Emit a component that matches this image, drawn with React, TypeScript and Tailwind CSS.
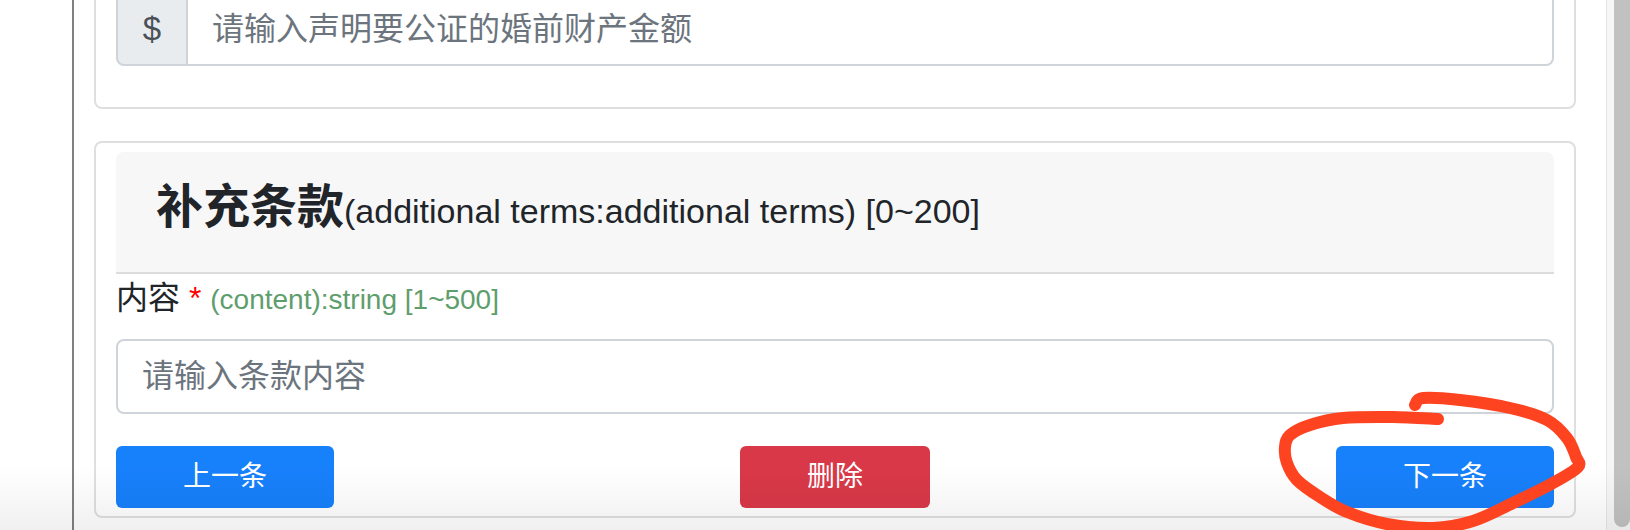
import React from 'react';

// hand-drawn red ring around the "next" button, in page coordinates
const ring: [number, number][] = [
  [1438, 419], [1393, 417], [1343, 418], [1310, 425], [1290, 435], [1285, 447],
  [1287, 463], [1297, 480], [1320, 497], [1347, 512], [1387, 524], [1433, 528],
  [1473, 521], [1513, 503], [1553, 483], [1578, 467], [1576, 457], [1567, 438],
  [1547, 420], [1510, 408], [1460, 400], [1423, 398], [1415, 405],
];

function smooth(pts: [number, number][]) {
  let d = `M${pts[0][0]},${pts[0][1]}`;
  for (let i = 0; i < pts.length - 1; i++) {
    const p0 = pts[i - 1] || pts[i];
    const p1 = pts[i];
    const p2 = pts[i + 1];
    const p3 = pts[i + 2] || p2;
    const c1x = p1[0] + (p2[0] - p0[0]) / 6;
    const c1y = p1[1] + (p2[1] - p0[1]) / 6;
    const c2x = p2[0] - (p3[0] - p1[0]) / 6;
    const c2y = p2[1] - (p3[1] - p1[1]) / 6;
    d += ` C${c1x},${c1y} ${c2x},${c2y} ${p2[0]},${p2[1]}`;
  }
  return d;
}

export default function App() {
  return (
    <div className="relative h-[530px] w-[1630px] overflow-hidden bg-white font-['Liberation_Sans','Noto_Sans_CJK_SC',sans-serif] text-[#212529]">
      <div className="flex h-full">
        <div className="w-[72px] shrink-0" />

        <main className="flex-1 border-l-2 border-[#808080] pl-[20px] pr-[30px]">
          {/* amount card, scrolled mostly out of view */}
          <section className="-mt-[23px] rounded-[8px] border-2 border-[#dfdfdf] px-[20px] pt-[10px] pb-[41px]">
            <div className="flex h-[77px]">
              <span className="flex w-[72px] shrink-0 items-center justify-center rounded-l-[8px] border-2 border-[#ced4da] bg-[#e9ecef] pt-[2px] text-[33px] text-[#495057]">
                $
              </span>
              <input
                placeholder="请输入声明要公证的婚前财产金额"
                className="min-w-0 flex-1 rounded-r-[8px] border-2 border-l-0 border-[#ced4da] bg-white px-[24px] pt-[3px] text-[32px] outline-none placeholder:text-[#6c757d]"
              />
            </div>
          </section>

          {/* additional terms card */}
          <section className="mt-[32px] rounded-[8px] border-2 border-[#dfdfdf] px-[20px] pt-[9px] pb-[8px]">
            <div className="rounded-t-[8px] border-b-2 border-[#dcdcdc] bg-[#f7f7f7] pl-[40px] pt-[26px] pb-[36px]">
              <h4 className="text-[47px] font-bold leading-[58px]">
                补充条款
                <span className="text-[34px] font-normal leading-none">
                  (additional terms:additional terms) [0~200]
                </span>
              </h4>
            </div>

            <label className="block h-[49px] text-[32px] leading-[49px]">
              内容 <span className="text-[#ff0000]">*</span>{' '}
              <small className="text-[28px] text-[#5e9e6c]">(content):string [1~500]</small>
            </label>

            <input
              placeholder="请输入条款内容"
              className="mt-[16px] block h-[75px] w-full rounded-[8px] border-2 border-[#ced4da] bg-white px-[24px] text-[32px] outline-none placeholder:text-[#6c757d]"
            />

            <div className="mt-[32px] flex items-center justify-between">
              <button className="h-[62px] w-[218px] rounded-[6px] bg-[#1780fb] text-[28px] text-white">上一条</button>
              <button className="h-[62px] w-[190px] rounded-[6px] bg-[#d93848] text-[28px] text-white">删除</button>
              <button className="h-[62px] w-[218px] rounded-[6px] bg-[#1780fb] text-[28px] text-white">下一条</button>
            </div>
          </section>
        </main>

        <div className="w-[24px] shrink-0 border-l border-[#e6e6e6] bg-[#f6f6f6] pl-[7px]">
          <div className="h-[527px] rounded-b-[8px] bg-[#c1c1c1]" />
        </div>
      </div>

      <div className="pointer-events-none absolute inset-x-0 bottom-0 h-[64px] bg-linear-to-b from-transparent to-[rgba(0,0,0,0.06)]" />

      <svg className="pointer-events-none absolute inset-0" width="1630" height="530" viewBox="0 0 1630 530">
        <path d={smooth(ring)} fill="none" stroke="#fe4321" strokeWidth="12" strokeLinecap="round" strokeLinejoin="round" />
      </svg>
    </div>
  );
}
